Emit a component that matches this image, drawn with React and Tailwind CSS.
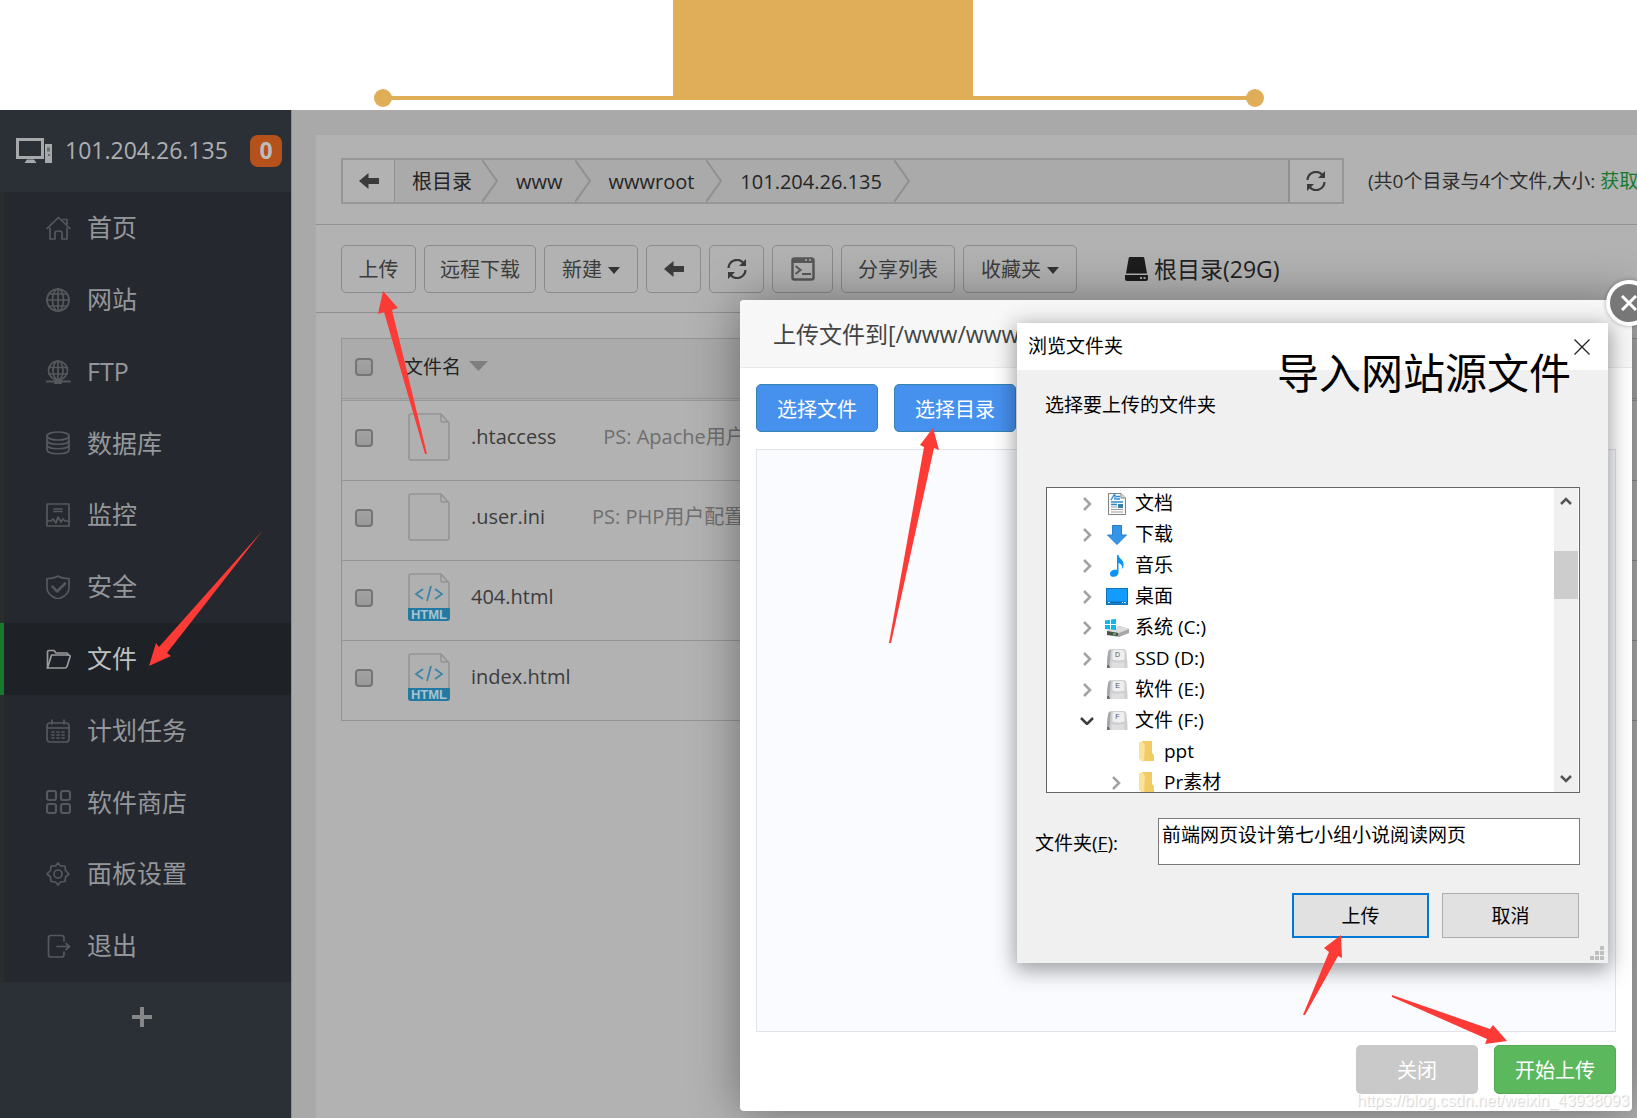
import React from "react";

const stroke = { fill: "none", stroke: "currentColor", strokeLinecap: "round", strokeLinejoin: "round" };

function MenuIcon({ name }) {
  const shapes = {
    home: (
      <>
        <path d="M1 12.500 12.500 1.500 24 12.500" />
        <path d="M4 12v11h5v-6.500q0-1.500 3.500-1.500t3.500 1.500V23h5V12" />
        <path d="M17 3.500h4V8" />
      </>
    ),
    globe: (
      <>
        <circle cx="12" cy="12" r="11" />
        <ellipse cx="12" cy="12" rx="5.500" ry="11" />
        <path d="M12 1v22M1 12h22M3 6h18M3 18h18" />
      </>
    ),
    ftp: (
      <>
        <circle cx="12" cy="10.500" r="9.500" />
        <ellipse cx="12" cy="10.500" rx="5" ry="9.500" />
        <path d="M12 1v20M3 7.500h18M3 14h18" />
        <path d="M0 21.500h24" strokeWidth="2" />
        <rect x="9" y="19.500" width="6" height="4" fill="currentColor" />
      </>
    ),
    db: (
      <>
        <ellipse cx="12" cy="5" rx="11" ry="4" />
        <path d="M1 5v14c0 5 22 5 22 0V5" />
        <path d="M1 9.500c0 5 22 5 22 0M1 14c0 5 22 5 22 0" />
      </>
    ),
    monitor: (
      <>
        <rect x="1" y="1" width="22" height="22" />
        <path d="M8 6h8M8 8.500h8" />
        <path d="M1 18h4l2-2 3 4 2-6 3 5 2-3 2 2h4" />
      </>
    ),
    shield: (
      <>
        <path d="M12 1c3 2 7 2.500 11 2.500V13c0 5-5 9-11 11C6 22 1 18 1 13V3.500C5 3.500 9 3 12 1z" />
        <path d="m6.500 11.500 4.500 5 8-8" strokeWidth="2.500" />
      </>
    ),
    folder: (
      <>
        <path d="M1.500 21V5q0-1.500 1.500-1.500h5l2 2.500h10.500q1.500 0 1.500 2" />
        <path d="M1.500 21 5.500 8h17q2 0 1.500 2l-3 9.500q-.5 1.500-2 1.500z" />
      </>
    ),
    calendar: (
      <>
        <rect x="1" y="4" width="22" height="19" rx="3" />
        <path d="M1 9h22M6 1v4M18 1v4" />
        <path d="M6 13h2M11 13h2M16 13h2M6 16h2M11 16h2M16 16h2M6 19h2M11 19h2M16 19h2" />
      </>
    ),
    apps: (
      <g strokeWidth="2.200">
        <rect x="1" y="1" width="9" height="9" rx="2" />
        <rect x="15" y="1" width="9" height="9" rx="2" />
        <rect x="1" y="14" width="9" height="9" rx="2" />
        <rect x="15" y="14" width="9" height="9" rx="2" />
      </g>
    ),
    gear: (
      <>
        <path d="M9.500 4 12 1l2.500 3 4.500 0 .5 4.500L23 12l-3.500 3-.5 4.500-4.500 0.500L12 23l-2.500-3L5 19.500 4.500 15 1 12l3.500-3.500L5 4z" />
        <circle cx="12" cy="12" r="4" />
      </>
    ),
    exit: (
      <>
        <path d="M18 7V4q0-2.500-2.500-2.500H5Q2.500 1.500 2.500 4v16.500Q2.500 23 5 23h10.500q2.500 0 2.500-2.500V18" />
        <path d="M11 12.500h12M20 9.500l3.500 3-3.500 3" />
      </>
    ),
  };
  return (
    <svg className="h-6 w-[25px] shrink-0" viewBox="0 0 25 24" {...stroke} strokeWidth="1.700" aria-hidden="true">
      {shapes[name]}
    </svg>
  );
}

const menu = [
  ["home", "首页"],
  ["globe", "网站"],
  ["ftp", "FTP"],
  ["db", "数据库"],
  ["monitor", "监控"],
  ["shield", "安全"],
  ["folder", "文件", true],
  ["calendar", "计划任务"],
  ["apps", "软件商店"],
  ["gear", "面板设置"],
  ["exit", "退出"],
];

function Banner() {
  return (
    <header className="flex h-[110px] flex-col items-center bg-white">
      <div className="ml-2 h-24 w-[300px] bg-[#e0ad58]" />
      <div className="relative h-1 w-[880px] bg-[#e0ad58]">
        <span className="absolute -left-[5px] -top-[7px] size-[18px] rounded-full bg-[#e0ad58]" />
        <span className="absolute -right-[5px] -top-[7px] size-[18px] rounded-full bg-[#e0ad58]" />
      </div>
    </header>
  );
}

function Sidebar() {
  return (
    <aside className="w-[292px] shrink-0 border-r border-[#8d8f91] bg-[#2b3037]">
      <div className="flex h-[82px] items-center pl-4 pr-[9px]">
        <svg className="h-[26px] w-9" viewBox="0 0 36 26" fill="none" aria-hidden="true">
          <rect x="1.500" y="1.500" width="25" height="18" stroke="#a6a8aa" strokeWidth="3" />
          <path d="M11 21.500h7l2.500 3.500h-12z" fill="#a6a8aa" />
          <rect x="29" y="6" width="7" height="19" fill="#a6a8aa" />
          <path d="M31 9.500h3v4h-3zM32 16h2v2h-2z" fill="#6b6e71" />
        </svg>
        <span className="ml-[13px] pb-[3px] text-[23px] leading-8 text-[#adafb1]">101.204.26.135</span>
        <span className="ml-auto flex size-8 items-center justify-center rounded-lg bg-[#b5511a] pb-0.5 text-[23px] font-bold text-[#bcbcbc]">0</span>
      </div>
      <nav>
        <ul className="flex h-[790px] flex-col bg-[#25292f]">
          {menu.map(([icon, label, active]) => (
            <li key={icon} className="flex-1">
              <a
                href="#"
                className={
                  active
                    ? "flex h-full items-center border-l-4 border-[#187a2e] bg-[#1e2226] pl-[42px] text-[25px] text-[#bfc0c1]"
                    : "flex h-full items-center border-l-4 border-[#2b2c2d] pl-[42px] text-[25px] text-[#94979a]"
                }
              >
                <span className={active ? "text-[#9a9a9a]" : "text-[#55595d]"}>
                  <MenuIcon name={icon} />
                </span>
                <span className="ml-4">{label}</span>
              </a>
            </li>
          ))}
        </ul>
      </nav>
      <button type="button" aria-label="添加" className="mt-[25px] flex w-full justify-center pr-[7px] text-[#858789]">
        <svg className="size-5" viewBox="0 0 20 20" stroke="currentColor" strokeWidth="4" aria-hidden="true">
          <path d="M10 0v20M0 10h20" />
        </svg>
      </button>
    </aside>
  );
}

const BackArrow = () => (
  <svg className="h-4 w-5" viewBox="0 0 20 16" fill="#3b3b3b" aria-hidden="true">
    <path d="M0 8 9.500 0v5H20v6H9.500v5z" />
  </svg>
);

const Refresh = () => (
  <svg className="size-5" viewBox="0 0 20 20" aria-hidden="true">
    <path d="M1.500 9A8.500 8.500 0 0 1 16 3.500M18.500 11A8.500 8.500 0 0 1 4 16.500" fill="none" stroke="#3b3b3b" strokeWidth="2.200" />
    <path d="M19 0v7h-7zM1 20v-7h7z" fill="#3b3b3b" />
  </svg>
);

const Caret = () => (
  <svg className="ml-1.5 h-[7px] w-3" viewBox="0 0 12 7" aria-hidden="true">
    <path d="M0 0h12L6 7z" fill="#333" />
  </svg>
);

function PathBar() {
  return (
    <div className="flex items-center border-b border-[#929292] pb-5 pl-[25px] pt-[23px]">
      <div className="flex h-[46px] min-w-0 flex-1 border-2 border-[#979797] bg-[#aaa]">
        <button type="button" aria-label="返回" className="flex w-[52px] items-center justify-center border-r border-[#8f8f8f] bg-[#b2b2b2]">
          <BackArrow />
        </button>
        <nav className="flex flex-1 items-center text-xl text-[#252525]">
          {["根目录", "www", "wwwroot", "101.204.26.135"].map((part, i) => (
            <React.Fragment key={part}>
              <a href="#" className={i ? "pl-[18px] pr-3 pt-0.5" : "pl-[17px] pr-[10px] pt-0.5"}>
                {part}
              </a>
              <svg className="h-[42px] w-4 shrink-0" viewBox="0 0 16 42" fill="none" stroke="#8f8f96" strokeWidth="2" aria-hidden="true">
                <path d="M0 0 15 21 0 42" />
              </svg>
            </React.Fragment>
          ))}
        </nav>
        <button type="button" aria-label="刷新" className="flex w-[54px] items-center justify-center border-l-2 border-[#8f8f8f] bg-[#b2b2b2]">
          <Refresh />
        </button>
      </div>
      <p className="w-[293px] shrink-0 overflow-hidden whitespace-nowrap pl-6 text-[19px] text-[#2d2d2d]">
        (共0个目录与4个文件,大小: <a href="#" className="text-[#187a2e]">获取</a>)
      </p>
    </div>
  );
}

function ToolButton({ className, label, children }) {
  return (
    <button
      type="button"
      aria-label={label}
      className={"flex h-12 shrink-0 items-center justify-center rounded-[5px] border border-[#8b8b8b] text-xl text-[#3c3c3c] " + className}
    >
      {children}
    </button>
  );
}

function Toolbar() {
  return (
    <div className="flex items-center gap-2 border-b border-[#8f8f8f] pb-[19px] pl-[25px] pt-5">
      <ToolButton className="w-[75px] pt-0.5">上传</ToolButton>
      <ToolButton className="w-28 pt-0.5">远程下载</ToolButton>
      <ToolButton className="w-[94px] pt-0.5">新建<Caret /></ToolButton>
      <ToolButton className="w-[55px]" label="后退"><BackArrow /></ToolButton>
      <ToolButton className="w-[55px]" label="重新载入"><Refresh /></ToolButton>
      <ToolButton className="w-[61px]" label="终端">
        <svg className="size-6" viewBox="0 0 24 24" fill="none" stroke="#585858" aria-hidden="true">
          <rect x="1.500" y="1.500" width="21" height="21" rx="2" strokeWidth="2.500" />
          <path d="M1.500 4h21" strokeWidth="4" />
          <path d="M14 3h2M18 3h2" stroke="#aaa" strokeWidth="1.500" />
          <path d="m4.500 9 5 4-5 4M11 17h9" strokeWidth="2" />
        </svg>
      </ToolButton>
      <ToolButton className="w-[114px] pt-0.5">分享列表</ToolButton>
      <ToolButton className="w-[114px] pt-0.5">收藏夹<Caret /></ToolButton>
      <div className="ml-10 flex items-center gap-1.5 text-[23px] leading-8 text-[#222]">
        <svg className="h-6 w-[23px]" viewBox="0 0 23 24" fill="#1d1d1d" aria-hidden="true">
          <path d="M5 0h13q1 0 1.300 1L22 16.500H1L3.700 1Q4 0 5 0z" />
          <path d="M0 18h23v4q0 2-2 2H2q-2 0-2-2z" />
          <path d="M15 20h2v2h-2zM18.500 20h2v2h-2z" fill="#aaa" />
        </svg>
        <span>根目录(29G)</span>
      </div>
    </div>
  );
}

function FileIcon({ html }) {
  return (
    <svg className="h-12 w-[42px]" viewBox="0 0 42 48" aria-hidden="true">
      <path d="M3 1h30l8 9v35q0 2-2 2H3q-2 0-2-2V3q0-2 2-2z" fill="#b0b0b0" stroke="#929292" strokeWidth="1.500" />
      <path d="M33 1v6q0 2 2 2h6" fill="none" stroke="#929292" strokeWidth="1.500" />
      {html && (
        <>
          <path d="m15 16-7 5 7 5M27 16l7 5-7 5M23 13l-4 15" fill="none" stroke="#3c86a6" strokeWidth="1.800" />
          <path d="M0 35h42v10q0 3-3 3H3q-3 0-3-3z" fill="#227aa3" />
          <text x="21" y="46" textAnchor="middle" fontSize="13" fontWeight="700" fontFamily="Liberation Sans, sans-serif" fill="#a9c3ce">HTML</text>
        </>
      )}
    </svg>
  );
}

const boxClass =
  "block size-[18px] appearance-none rounded-[4px] border-2 border-[#757575] bg-linear-to-b from-[#a3a3a3] to-[#999]";

const files = [
  [".htaccess", "PS: Apache用户配置文件(伪静态)"],
  [".user.ini", "PS: PHP用户配置文件(防跨站)!"],
  ["404.html"],
  ["index.html"],
];

function FileTable() {
  return (
    <div className="overflow-hidden pl-[25px] pt-[25px]">
      <table className="w-full border-separate border-spacing-0 border-l border-t border-[#949494] text-left">
        <thead>
          <tr className="h-[62px] bg-[#ababab]">
            <th className="w-[66px] border-b-[3px] border-double border-[#989898] pb-1 pl-[13px]">
              <input type="checkbox" aria-label="全选" className={boxClass} />
            </th>
            <th className="border-b-[3px] border-double border-[#989898] pb-0.5 text-[19px] font-normal text-[#222]">
              <button type="button" className="-ml-1 flex items-center">
                文件名
                <svg className="mb-1 ml-2 h-2.5 w-[19px]" viewBox="0 0 19 10" aria-hidden="true">
                  <path d="M0 0h19l-9.500 10z" fill="#7f7f7f" />
                </svg>
              </button>
            </th>
          </tr>
        </thead>
        <tbody>
          {files.map(([name, note]) => (
            <tr key={name} className="h-20">
              <td className="border-b border-[#949494] pb-1.5 pl-[13px]">
                <input type="checkbox" aria-label={name} className={boxClass} />
              </td>
              <td className="border-b border-[#949494] pb-[7px]">
                <div className="flex items-center whitespace-nowrap text-xl">
                  <FileIcon html={name.endsWith("html")} />
                  <a href="#" className="ml-[21px] text-[#3c3c3c]">{name}</a>
                  {note && <span className="ml-[47px] text-[#6f6f6f]">{note}</span>}
                </div>
              </td>
            </tr>
          ))}
        </tbody>
      </table>
    </div>
  );
}

function TreeIcon({ type }) {
  if (type === "doc")
    return (
      <svg className="h-[22px] w-[18px]" viewBox="0 0 18 22" aria-hidden="true">
        <path d="M.5.5H13l4.500 4.500v16.500H.5z" fill="#fafafa" stroke="#7f8385" />
        <path d="M13 .5V5h4.500" fill="#ddd" stroke="#7f8385" />
        <path d="M3 7 6 2h1v5M8 3.500h4M8 6h4M3 9h12M3 11.500h6" fill="none" stroke="#2b8ad0" strokeWidth="1.300" />
        <path d="M3 14h6M3 16.500h12M3 19h12" stroke="#a0a0a0" />
        <path d="M10 11h5v4h-5z" fill="#3c7ea8" />
      </svg>
    );
  if (type === "down")
    return (
      <svg className="h-5 w-5" viewBox="0 0 20 20" aria-hidden="true">
        <path d="M5.500.5h9v9.500h5L10 19.500.5 10h5z" fill="#3494e6" stroke="#2a80cd" />
      </svg>
    );
  if (type === "music")
    return (
      <svg className="h-[22px] w-[14px]" viewBox="0 0 14 22" aria-hidden="true">
        <path d="M7 0h1.500c.5 4 5.500 5 5 9.500 0 2-.5 3.500-1.500 4.500.5-3-.5-5-3.500-6v9.500c0 5-8.500 6-8.500 1.500C0 16 3.500 14 7 15z" fill="#0c94f4" />
      </svg>
    );
  if (type === "desktop")
    return (
      <svg className="h-[17px] w-[22px]" viewBox="0 0 22 17" aria-hidden="true">
        <rect x=".5" y=".5" width="21" height="16" fill="#139cfb" stroke="#1273b8" />
        <path d="M1 14.500h20" stroke="#0c6cae" strokeWidth="2" />
        <path d="M2 14.500h2M16 14.500h1M18 14.500h2" stroke="#d8efff" />
      </svg>
    );
  if (type === "system")
    return (
      <svg className="h-[18px] w-6" viewBox="0 0 24 18" aria-hidden="true">
        <path d="M2 12 14 7l10 3v4l-10 4L2 16z" fill="#a6a6a6" />
        <path d="M2 12 14 7l10 3-10 4z" fill="#dcdcdc" />
        <path d="m2 12 11 2v3L2 16z" fill="#4a4f4a" />
        <path d="M8 15h3" stroke="#4cd04c" strokeWidth="1.500" />
        <path d="M0 1.500 5 .8V5H0zM6 .6 11 0v5H6zM0 6h5v4.500L0 10zM6 6h5v5l-5-.5z" fill="#10b5ef" />
      </svg>
    );
  if (type === "folder")
    return (
      <svg className="h-[21px] w-[15px]" viewBox="0 0 15 21" aria-hidden="true">
        <path d="M3 0h10v12l2 2v6H2z" fill="#f3cb64" />
        <path d="M0 1h4l2 3-1 17-5-3z" fill="#fbe19a" />
      </svg>
    );
  return (
    <svg className="h-5 w-[21px]" viewBox="0 0 21 20" aria-hidden="true">
      <path d="M1 4Q1 0 5 0h11q3.500 0 3.500 4l1 10v5H0v-7z" fill="#cfcfd1" />
      <path d="M7 1h8q2.500 0 2.500 2v7.500q-6 2-12 0V3Q5.500 1 7 1z" fill="#efefef" />
      <path d="M4.500 13q6 1.500 12.500 0l.5 6h-13z" fill="#dededf" />
      <path d="M1 4Q1 1 4 .5q-1 4-.8 10L2 19H0v-7z" fill="#a6a6aa" />
      <path d="M0 16h2l1 3H0z" fill="#6d6d74" />
      <text x="10.500" y="8" textAnchor="middle" fontSize="7" fontFamily="Liberation Sans, sans-serif" fill="#555">{type}</text>
    </svg>
  );
}

const tree = [
  ["doc", "文档"],
  ["down", "下载"],
  ["music", "音乐"],
  ["desktop", "桌面"],
  ["system", "系统 (C:)"],
  ["D", "SSD (D:)"],
  ["E", "软件 (E:)"],
  ["F", "文件 (F:)", "open"],
  ["folder", "ppt", "leaf"],
  ["folder", "Pr素材", "child"],
];

function TreeRow({ icon, label, state }) {
  const nested = state === "leaf" || state === "child";
  return (
    <li className={nested ? "flex h-[31px] items-center pl-[59px]" : "flex h-[31px] items-center pl-[30px]"}>
      {state === "leaf" ? (
        <span className="w-5" />
      ) : (
        <button type="button" aria-label={"展开 " + label} className="flex w-5 justify-center">
          {state === "open" ? (
            <svg className="h-2 w-3.5" viewBox="0 0 14 8" fill="none" stroke="#3c3c3c" strokeWidth="2.500" aria-hidden="true">
              <path d="m1 1 6 6 6-6" />
            </svg>
          ) : (
            <svg className="h-3.5 w-[9px]" viewBox="0 0 9 14" fill="none" stroke="#a2a2a2" strokeWidth="2.500" aria-hidden="true">
              <path d="m1 1 6 6-6 6" />
            </svg>
          )}
        </button>
      )}
      <span className="ml-2 flex w-6 justify-center">
        <TreeIcon type={icon} />
      </span>
      <span className="ml-1.5 whitespace-nowrap text-[19px]">{label}</span>
    </li>
  );
}

function BrowseDialog() {
  return (
    <section
      aria-label="浏览文件夹"
      className="absolute left-[1017px] right-[29px] top-[323px] flex h-[640px] flex-col bg-[#f0f0f0] text-[19px] text-black shadow-[0_5px_20px_2px_rgba(0,0,0,0.38)]"
    >
      <div className="flex h-[47px] items-center justify-between bg-white pl-[11px] pr-[18px]">
        <h2>浏览文件夹</h2>
        <button type="button" aria-label="关闭窗口">
          <svg className="size-4" viewBox="0 0 16 16" stroke="#222" strokeWidth="1.300" aria-hidden="true">
            <path d="m.5.5 15 15m0-15-15 15" />
          </svg>
        </button>
      </div>
      <p className="pl-7 pt-5 leading-[30px]">选择要上传的文件夹</p>
      <div className="ml-[29px] mr-7 mt-[67px] flex h-[306px] overflow-hidden border border-[#646464] bg-white">
        <ul className="flex-1">
          {tree.map(([icon, label, state]) => (
            <TreeRow key={label} icon={icon} label={label} state={state} />
          ))}
        </ul>
        <div className="mr-px flex w-6 flex-col items-center bg-[#f0f0f0] pb-[9px] pt-[9px]">
          <svg className="h-2 w-3" viewBox="0 0 12 8" fill="none" stroke="#555" strokeWidth="2.500" aria-hidden="true">
            <path d="m1 7 5-5 5 5" />
          </svg>
          <span className="mt-[46px] h-12 w-full bg-[#cdcdcd]" />
          <svg className="mt-auto h-2 w-3" viewBox="0 0 12 8" fill="none" stroke="#555" strokeWidth="2.500" aria-hidden="true">
            <path d="m1 1 5 5 5-5" />
          </svg>
        </div>
      </div>
      <div className="mr-7 mt-[25px] flex items-center pl-[18px]">
        <label htmlFor="folder" className="w-[123px] pt-1">
          文件夹(<u>F</u>):
        </label>
        <textarea
          id="folder"
          rows={1}
          defaultValue="前端网页设计第七小组小说阅读网页"
          className="h-[47px] min-w-0 flex-1 resize-none overflow-hidden whitespace-nowrap border border-[#7a7a7a] bg-white px-[3px] py-0.5 leading-[28px]"
        />
      </div>
      <div className="mt-7 flex justify-end gap-[13px] pr-[29px]">
        <button type="button" className="h-[45px] w-[137px] border-2 border-[#0078d7] bg-[#e1e1e1] pt-0.5">上传</button>
        <button type="button" className="h-[45px] w-[137px] border border-[#adadad] bg-[#e1e1e1] pt-0.5">取消</button>
      </div>
      <svg className="mb-[3px] ml-auto mr-1 mt-auto size-[14px]" viewBox="0 0 14 14" fill="#bfbfbf" aria-hidden="true">
        <path d="M10 0h4v4h-4zM5 5h4v4H5zM10 5h4v4h-4zM0 10h4v4H0zM5 10h4v4H5zM10 10h4v4h-4z" />
      </svg>
    </section>
  );
}

function UploadDialog() {
  return (
    <section
      aria-label="上传文件"
      className="absolute left-[740px] right-[5px] top-[300px] flex h-[811px] flex-col rounded-sm bg-white shadow-[1px_1px_50px_rgba(0,0,0,0.4)]"
    >
      <h1 className="flex h-[68px] items-center overflow-hidden whitespace-nowrap rounded-t-sm border-b border-[#e9e9e9] bg-[#f7f7f7] pl-[33px] pt-0.5 text-[23px] text-[#444]">
        上传文件到[/www/www
      </h1>
      <div className="flex gap-4 px-4 pt-4 text-xl text-white">
        <button type="button" className="h-12 w-[122px] rounded-[5px] border border-[#3782b0] bg-[#4690ee] pt-[3px]">选择文件</button>
        <button type="button" className="h-12 w-[122px] rounded-[5px] border border-[#3782b0] bg-[#4690ee] pt-[3px]">选择目录</button>
      </div>
      <div className="mx-4 mt-[17px] flex-1 border border-[#e0e3e8] bg-[#f9fbff]" />
      <div className="flex justify-end gap-4 px-4 pb-[17px] pt-[13px] text-xl text-white">
        <button type="button" className="h-[49px] w-[122px] rounded-[5px] bg-[#c9c9c9] pt-0.5">关闭</button>
        <button type="button" className="h-[49px] w-[122px] rounded-[5px] border border-[#52ab52] bg-[#5cb85c] pt-0.5">开始上传</button>
      </div>
      <button
        type="button"
        aria-label="关闭上传"
        className="absolute -right-5 -top-5 flex size-[46px] items-center justify-center rounded-full border-4 border-white bg-[#787878] shadow-[0_0_4px_rgba(0,0,0,0.3)]"
      >
        <svg className="size-4" viewBox="0 0 16 16" stroke="#fff" strokeWidth="3" aria-hidden="true">
          <path d="m1 1 14 14m0-14L1 15" />
        </svg>
      </button>
    </section>
  );
}

function Arrows() {
  return (
    <svg className="pointer-events-none absolute left-0 top-0 h-[1118px] w-[1637px]" viewBox="0 0 1637 1118" fill="#fc3a36" aria-hidden="true">
      <path d="M263 530 159 647 156 643 149 666 171 656 167 653z" />
      <path d="M383 291 378 314 384 312 425 454 427 454 392 310 398 308z" />
      <path d="M933 428 920 445 924 447 889 643 891 643 934 448 939 450z" />
      <path d="M1341 935 1324 948 1329 952 1303 1015 1305 1015 1338 956 1342 958z" />
      <path d="M1392 995 1490 1029 1493 1025 1507 1041 1485 1044 1487 1039 1392 997z" />
    </svg>
  );
}

export default function App() {
  return (
    <div className="relative flex min-h-screen flex-col overflow-hidden bg-[#a9a9a9] font-['Open_Sans','Noto_Sans_CJK_SC',sans-serif]">
      <Banner />
      <div className="flex flex-1">
        <Sidebar />
        <main className="min-w-0 flex-1 pl-6 pt-[25px]">
          <div className="h-full bg-[#b2b2b2]">
            <PathBar />
            <Toolbar />
            <FileTable />
          </div>
        </main>
      </div>
      <UploadDialog />
      <BrowseDialog />
      <p className="absolute right-[66px] top-[343px] text-[42px] leading-[60px] text-black">导入网站源文件</p>
      <Arrows />
      <p className="absolute bottom-[7px] right-2 font-['Liberation_Sans',sans-serif] text-base leading-5 text-white/80 [text-shadow:1px_1px_1px_rgba(0,0,0,0.2)]">
        https://blog.csdn.net/weixin_43938093
      </p>
    </div>
  );
}
